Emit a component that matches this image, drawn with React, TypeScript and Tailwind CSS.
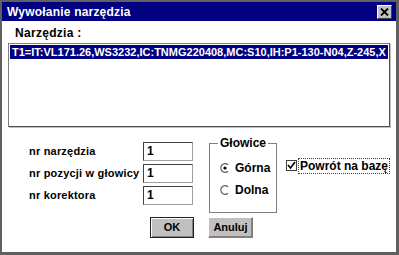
import React from "react";

const font = { fontFamily: '"Liberation Sans", Arial, sans-serif' };

const Field: React.FC<{ value: string }> = ({ value }) => (
    <div className="w-[50px] h-[19px] border border-[#404040] border-r-[#a0a0a0] border-b-[#a0a0a0] bg-white pl-[3px] text-[12px] font-bold leading-[17px] text-black">
        {value}
    </div>
);

const Radio: React.FC<{ checked?: boolean; label: string }> = ({ checked, label }) => (
    <div className="flex items-center gap-[5px] h-[14px]">
        <svg width="10" height="10" viewBox="0 0 10 10">
            <path d="M8 1.8 A4.3 4.3 0 1 0 8 8.2" fill="none" stroke="#606060" strokeWidth="1.3" />
            {checked && <circle cx="5" cy="5" r="1.6" fill="#000" />}
        </svg>
        <span className="text-[12px] font-bold leading-[14px]">{label}</span>
    </div>
);

const App: React.FC = () => {
    return (
        <div style={font} className="w-[399px] h-[255px] bg-[#606060] p-[2px] pr-[3px] pb-[3px] text-black overflow-hidden">
            <div className="w-full h-full bg-white flex flex-col">
                {/* pasek tytułu */}
                <div className="h-[19px] bg-[#000080] flex items-center justify-between pl-[5px] pr-[4px]">
                    <span className="text-white text-[12px] font-bold tracking-[0.2px]">Wywołanie narzędzia</span>
                    <div className="w-[15px] h-[14px] bg-[#c0c0c0] border border-white border-r-[#404040] border-b-[#404040] flex items-center justify-center">
                        <svg width="9" height="8" viewBox="0 0 9 8">
                            <path d="M1 0.5 L8 7.5 M8 0.5 L1 7.5" stroke="#000" strokeWidth="1.8" />
                        </svg>
                    </div>
                </div>

                <div className="flex-1 flex flex-col px-[6px]">
                    <div className="pl-[7px] pt-[5px] text-[12px] font-bold leading-[15px] tracking-[0.3px]">Narzędzia :</div>

                    {/* lista */}
                    <div className="mt-[2px] h-[84px] border border-[#808080] border-r-[#505050] border-b-[#505050] shadow-[1px_1px_0_#c0c0c0] p-[1px]">
                        <div className="h-[14px] bg-[#000080] text-white text-[11px] font-bold leading-[14px] pl-[2px] whitespace-nowrap overflow-hidden tracking-[0px]">
                            T1=IT:VL171.26,WS3232,IC:TNMG220408,MC:S10,IH:P1-130-N04,Z-245,X
                        </div>
                    </div>

                    {/* formularz */}
                    <div className="flex mt-[15px]">
                        <div className="flex flex-col gap-[3px] pl-[21px]">
                            {[
                                ["nr narzędzia", "1"],
                                ["nr pozycji w głowicy", "1"],
                                ["nr korektora", "1"],
                            ].map(([label, v]) => (
                                <div key={label} className="flex items-center h-[19px]">
                                    <span className="w-[114px] text-[11px] font-bold tracking-[0.2px]">{label}</span>
                                    <Field value={v} />
                                </div>
                            ))}
                        </div>

                        <div className="relative ml-[16px] mt-[1px] w-[73px] h-[70px] border border-[#808080] shadow-[1px_1px_0_#fff]">
                            <span className="absolute left-[8px] -top-[8px] bg-white px-[2px] text-[12px] font-bold leading-[14px]">Głowice</span>
                            <div className="flex flex-col gap-[8px] pl-[10px] pt-[17px]">
                                <Radio checked label="Górna" />
                                <Radio label="Dolna" />
                            </div>
                        </div>

                        <div className="flex items-center ml-[9px] mt-[15px] h-[17px] whitespace-nowrap">
                            <div className="w-[11px] h-[11px] border border-[#404040] bg-white flex items-center justify-center">
                                <svg width="9" height="9" viewBox="0 0 9 9">
                                    <path d="M1 4 L3.5 7 L8 1" fill="none" stroke="#000" strokeWidth="1.6" />
                                </svg>
                            </div>
                            <span className="ml-[1px] px-[1px] border border-dotted border-[#404040] text-[12px] font-bold leading-[14px]">Powrót na bazę</span>
                        </div>
                    </div>

                    {/* przyciski */}
                    <div className="flex gap-[14px] ml-[142px] mt-[4px]">
                        <button className="w-[44px] h-[21px] bg-[#c0c0c0] border border-[#202020] shadow-[inset_1px_1px_0_#fff,inset_-1px_-1px_0_#808080] text-[11px] font-bold">OK</button>
                        <button className="w-[45px] h-[21px] bg-[#c0c0c0] border border-[#808080] border-t-white border-l-white shadow-[inset_-1px_-1px_0_#808080] text-[11px] font-bold">Anuluj</button>
                    </div>
                </div>
            </div>
        </div>
    );
};

export default App;
